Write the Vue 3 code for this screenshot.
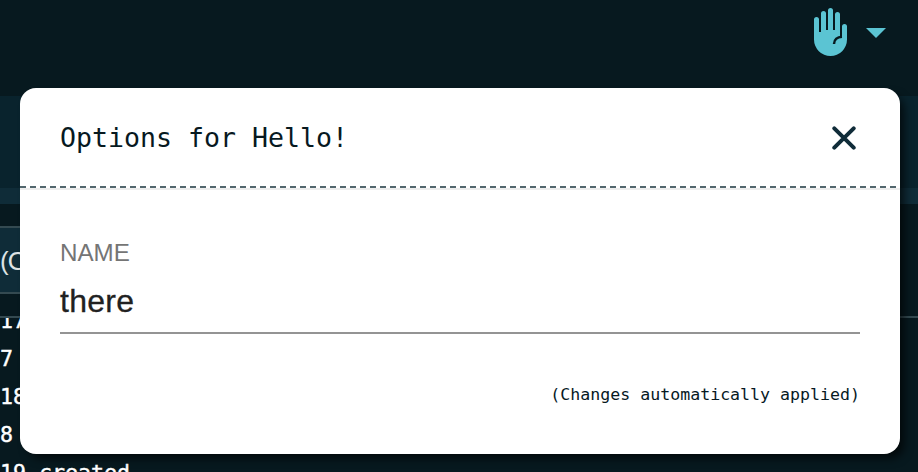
<script setup>
import { ref } from 'vue'

const name = ref('there')
const logLines = ['17', '7', '18', '8', '19 created']
</script>

<template>
  <div class="screen">
    <header class="topbar">
      <svg class="hand" viewBox="0 0 34 48" width="34" height="48">
        <path class="hand-fill" d="M0 11.5a2.5 2.5 0 0 1 5 0V24H7V5.5a2.5 2.5 0 0 1 5 0V22H14V2.5a2.5 2.5 0 0 1 5 0V22H21V6.5a2.5 2.5 0 0 1 5 0V28H28V18.500a2.500 2.500 0 0 1 5 0V31.500A16.500 16.500 0 0 1 0 31.500Z" />
        <path class="hand-crease" d="M28 28.700C23.500 29 20 31.500 20 36" />
      </svg>
      <svg class="caret" viewBox="0 0 20 10" width="20" height="10">
        <path d="M0 0H20L10 10Z" />
      </svg>
    </header>
    <div class="band"></div>
    <div class="band-edge"></div>
    <div class="filters"><div class="chip">(O</div></div>
    <div class="log">
      <div v-for="line in logLines" :key="line" class="log-line">{{ line }}</div>
    </div>

    <section class="modal">
      <div class="modal-head">
        <h1>Options for Hello!</h1>
        <svg class="close" viewBox="0 0 24 24" width="24" height="24">
          <path d="M2.300 2.300L21.700 21.700M21.700 2.300L2.300 21.700" />
        </svg>
      </div>
      <svg class="divider" width="880" height="4" viewBox="0 0 880 4">
        <path class="dashes" d="M0 1H880" />
        <path class="under" d="M0 3H880" />
      </svg>
      <div class="modal-body">
        <div class="label">NAME</div>
        <div class="value">{{ name }}</div>
        <p class="note">(Changes automatically applied)</p>
      </div>
    </section>
  </div>
</template>

<style>
body {
  margin: 0;
  background: #07191f;
}
</style>

<style scoped>
.screen {
  position: relative;
  box-sizing: border-box;
  width: 918px;
  height: 472px;
  overflow: hidden;
  background: #07191f;
  font-family: "DejaVu Sans Mono", monospace;
}
.topbar {
  display: flex;
  justify-content: flex-end;
  box-sizing: border-box;
  height: 96px;
  padding: 8px 32px 0 0;
  gap: 18px;
}
.hand-fill,
.caret {
  fill: #5bc4d3;
}
.hand-crease {
  fill: none;
  stroke: #07191f;
  stroke-width: 2.500;
}
.caret {
  margin-top: 20px;
}
.band {
  height: 92px;
  background: #09232d;
}
.band-edge {
  height: 16px;
  background: #0f2c38;
}
.filters {
  box-sizing: border-box;
  height: 114px;
  padding-top: 22px;
  border-bottom: 2px solid #344a51;
}
.chip {
  box-sizing: border-box;
  width: 200px;
  height: 68px;
  border: 2px solid #344a51;
  border-width: 2px 0;
  background: #0f2c38;
  color: #dde3e4;
  font: 26px/66px "Liberation Sans", Arial, sans-serif;
  letter-spacing: -1px;
}
.log {
  height: 154px;
  overflow: hidden;
  color: #fff;
  font-size: 21.600px;
  line-height: 38px;
  -webkit-text-stroke: 0.400px #fff;
}
.log-line {
  height: 38px;
  white-space: pre;
}
.log-line:first-child {
  margin-top: -16px;
}
.modal {
  position: absolute;
  left: 20px;
  top: 88px;
  width: 880px;
  height: 366px;
  border-radius: 16px;
  background: #fff;
  box-shadow: 6px 6px 10px -2px rgba(0, 0, 0, 0.7);
}
.modal-head {
  display: flex;
  align-items: center;
  justify-content: space-between;
  box-sizing: border-box;
  height: 98px;
  padding: 2px 44px 0 40px;
}
h1 {
  margin: 0;
  color: #07191f;
  font-size: 26.580px;
  font-weight: 400;
  line-height: 42px;
}
.close path {
  fill: none;
  stroke: #102c39;
  stroke-width: 4;
  stroke-linecap: round;
}
.divider {
  display: block;
}
.divider path {
  fill: none;
  stroke-width: 2;
}
.dashes {
  stroke: #52666d;
  stroke-dasharray: 6 4;
}
.under {
  stroke: #eee;
}
.modal-body {
  padding: 46px 40px 0;
}
.label {
  height: 32px;
  color: #757575;
  font: 24.200px/34px "Liberation Sans", Arial, sans-serif;
}
.value {
  box-sizing: border-box;
  height: 66px;
  border-bottom: 2px solid #949494;
  color: #212121;
  font: 32px/66px "Liberation Sans", Arial, sans-serif;
  letter-spacing: 0.250px;
  -webkit-text-stroke: 0.300px #212121;
}
.note {
  margin: 45px 0 0;
  color: #07191f;
  font-size: 16.600px;
  line-height: 31px;
  text-align: right;
}
</style>
